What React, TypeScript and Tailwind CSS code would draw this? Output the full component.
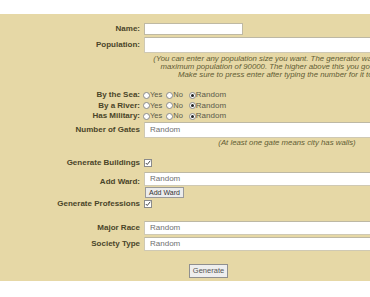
import React from "react";

const Label = ({ children, className = "" }: { children: React.ReactNode; className?: string }) => (
  <div className={`w-[141px] shrink-0 text-right pr-[1px] font-bold text-[8px] leading-[10px] text-[#4a4529] ${className}`}>
    {children}
  </div>
);

const Select = ({ h = 16 }: { h?: number }) => (
  <div
    className={`w-[286px] ml-[3px] bg-white border border-[#cfc9b4] border-t-[#bdb8a4] text-[#6f6f6f] text-[8px] pl-[5px] flex items-center ${
      h === 16 ? "h-[16px]" : "h-[14px]"
    }`}
  >
    Random
  </div>
);

const Radio = ({ checked }: { checked?: boolean }) => (
  <span className="w-[7px] h-[7px] rounded-full border border-[#8a8a8a] bg-white flex items-center justify-center shrink-0">
    {checked && <span className="w-[3px] h-[3px] rounded-full bg-[#222]" />}
  </span>
);

const RadioRow = ({ label, h }: { label: string; h: string }) => (
  <div className={`flex items-center ${h}`}>
    <Label>{label}</Label>
    <div className="flex items-center ml-[2px] text-[7.5px] text-[#5a5a4a]">
      <Radio />
      <span>Yes</span>
      <span className="ml-[4px]">
        <Radio />
      </span>
      <span>No</span>
      <span className="ml-[6px]">
        <Radio checked />
      </span>
      <span className="text-[8px]">Random</span>
    </div>
  </div>
);

const Check = () => (
  <span className="w-[8px] h-[8px] border border-[#8a8a8a] bg-white flex items-center justify-center ml-[3px]">
    <svg viewBox="0 0 8 8" className="w-[6px] h-[6px]">
      <path d="M1 4 L3 6 L7 1" fill="none" stroke="#333" strokeWidth="1.2" />
    </svg>
  </span>
);

const Note = ({ children }: { children: React.ReactNode }) => (
  <div className="flex">
    <div className="w-[144px] shrink-0" />
    <div className="w-[286px] shrink-0 text-center italic text-[7.8px] leading-[8px] text-[#625c34] whitespace-nowrap">
      {children}
    </div>
  </div>
);

export default function App() {
  return (
    <div
      className="w-[370px] h-[297px] bg-white overflow-hidden"
      style={{ fontFamily: '"Liberation Sans", Arial, sans-serif' }}
    >
      <div className="h-[14px]" />
      <div className="bg-[#e6d8a6] pt-[9px] pb-[3px] w-[440px]">
        <div className="flex items-center h-[12px]">
          <Label>Name:</Label>
          <div className="w-[99px] h-[12px] ml-[3px] bg-white border border-[#bfb9a3]" />
        </div>
        <div className="flex items-center h-[16px] mt-[2px]">
          <Label>Population:</Label>
          <div className="w-[286px] h-[16px] ml-[3px] bg-white border border-[#cfc9b4] border-t-[#bdb8a4]" />
        </div>
        <div className="mt-[2px]">
          <Note>
            (You can enter any population size you want. The generator was designed for
            <br />
            maximum population of 90000. The higher above this you go the slower it
            <br />
            Make sure to press enter after typing the number for it to work.)
          </Note>
        </div>
        <div className="mt-[11px]">
          <RadioRow label="By the Sea:" h="h-[10px]" />
          <RadioRow label="By a River:" h="h-[11px]" />
          <RadioRow label="Has Military:" h="h-[10px]" />
        </div>
        <div className="flex items-center mt-[1px]">
          <Label>Number of Gates</Label>
          <Select />
        </div>
        <div className="mt-[1px]">
          <Note>(At least one gate means city has walls)</Note>
        </div>
        <div className="flex items-center h-[10px] mt-[11px]">
          <Label>Generate Buildings</Label>
          <Check />
        </div>
        <div className="flex mt-[4px]">
          <Label className="pt-[5px]">Add Ward:</Label>
          <div className="flex flex-col items-start">
            <Select h={14} />
            <button className="ml-[4px] mt-[1px] h-[11px] px-[3px] bg-[#ececec] border border-[#9a9a9a] text-[7px] leading-[9px] text-[#333]">
              Add Ward
            </button>
          </div>
        </div>
        <div className="flex items-center h-[10px] mt-[1px]">
          <Label>Generate Professions</Label>
          <Check />
        </div>
        <div className="flex items-center mt-[12px]">
          <Label>Major Race</Label>
          <Select h={14} />
        </div>
        <div className="flex items-center mt-[2px]">
          <Label>Society Type</Label>
          <Select h={14} />
        </div>
        <div className="mt-[13px] ml-[189px]">
          <button className="w-[39px] h-[14px] bg-[#eeeeee] border border-[#8f8f8f] text-[7.5px] text-[#555] flex items-center justify-center">
            Generate
          </button>
        </div>
      </div>
    </div>
  );
}
